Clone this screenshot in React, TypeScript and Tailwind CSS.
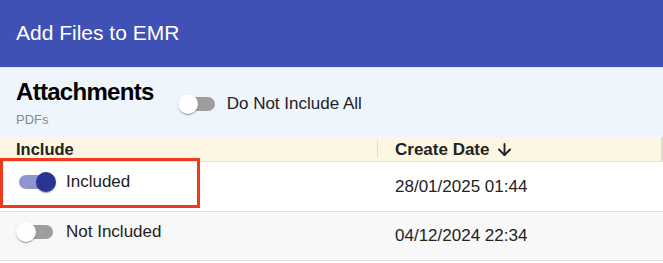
import { ArrowDown } from "lucide-react";

const rows = [
    { included: true, date: "28/01/2025 01:44" },
    { included: false, date: "04/12/2024 22:34" },
];

function Toggle({ on }: { on: boolean }) {
    return (
        <span className="relative block h-[38px] w-[58px] flex-none">
            <span
                className={
                    "absolute left-[12px] top-[12px] h-[14px] w-[34px] rounded-full " +
                    (on ? "bg-[#8e96cf]" : "bg-[#9e9e9e]")
                }
            />
            <span
                className={
                    "absolute top-[9px] h-5 w-5 rounded-full shadow-[0_2px_1px_-1px_rgba(0,0,0,0.2),0_1px_1px_0_rgba(0,0,0,0.14),0_1px_3px_0_rgba(0,0,0,0.12)] " +
                    (on ? "left-[29px] bg-[#283593]" : "left-[9px] bg-white")
                }
            />
        </span>
    );
}

export default function App() {
    return (
        <div className="relative h-[263px] w-[663px] overflow-hidden bg-white font-['Liberation_Sans',Arial,sans-serif] text-[#222]">
            <div className="flex h-[67px] items-center bg-[#3f51b5] px-4 pb-[1px] text-[21px] text-white">
                Add Files to EMR
            </div>
            <div className="flex h-[70px] items-center border-t border-[#e4e8ee] bg-[#eef5fd]">
                <div className="pl-4">
                    <div className="text-[24px] font-bold leading-[28px] tracking-[-0.7px] text-black">Attachments</div>
                    <div className="mt-[6px] text-[13px] leading-4 text-[#8a8a8a]">PDFs</div>
                </div>
                <div className="ml-[15px] flex items-center pt-[3px]">
                    <Toggle on={false} />
                    <span className="text-[17px]">Do Not Include All</span>
                </div>
            </div>
            <div className="flex h-[25px] border-b border-[#ebe4d2] bg-[#fdf6e3] font-bold">
                <div className="flex w-[377px] items-center pl-4 pt-[1px] text-[16.5px]">Include</div>
                <div className="my-[3px] w-px bg-[#e0dccf]" />
                <div className="flex flex-1 items-center pl-[17px] pt-[1px] text-[17px]">
                    Create Date
                    <ArrowDown className="ml-[5px] h-[19px] w-[19px]" strokeWidth={2.4} />
                </div>
                <div className="w-[2px] bg-[#e0dccf]" />
            </div>
            {rows.map((row, i) => (
                <div
                    key={row.date}
                    className={
                        "flex border-b border-[#e0e0e0] text-[17px] " +
                        (i % 2 ? "h-[49px] bg-[#f8f8f8]" : "h-[50px] bg-white")
                    }
                >
                    <div className="flex w-[377px] items-start pl-[7px]">
                        <div className="flex h-[38px] items-center pt-[1px]">
                            <Toggle on={row.included} />
                            <span className="ml-[1px]">{row.included ? "Included" : "Not Included"}</span>
                        </div>
                    </div>
                    <div className="flex flex-1 items-center pl-[18px]">{row.date}</div>
                </div>
            ))}
            <div className="pointer-events-none absolute left-0 top-[158px] h-[50px] w-[200px] border-[3px] border-[#f03a1d]" />
        </div>
    );
}
